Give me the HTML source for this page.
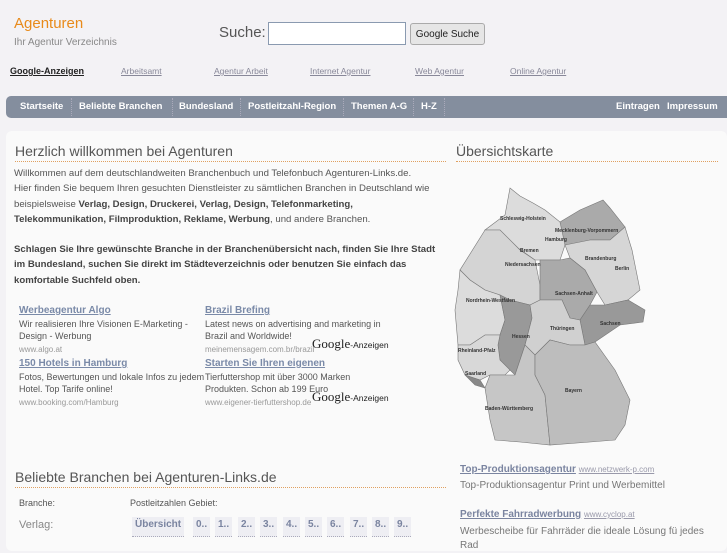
<!DOCTYPE html>
<html><head><meta charset="utf-8"><style>
*{margin:0;padding:0;box-sizing:border-box}
body{width:727px;height:545px;overflow:hidden;background:#f3f2f5;font-family:"Liberation Sans",sans-serif;color:#555;position:relative}
.a{position:absolute;white-space:nowrap}
.logo{left:14px;top:15px;font-size:15px;color:#e88a1a}
.sub{left:14px;top:37px;font-size:10px;color:#888}
.such{left:219px;top:24px;font-size:15px;color:#555}
.inp{left:268px;top:22px;width:138px;height:23px;border:1px solid #8a9ab0;background:#fff}
.btn{left:410px;top:23px;width:75px;height:22px;border:1px solid #aaa;border-radius:3px;background:#e6e6e6;font-size:10px;color:#222;text-align:center;line-height:21px}
.tl{top:66px;font-size:8.5px;color:#889;text-decoration:underline}
.nav{left:6px;top:96px;width:730px;height:22px;background:#848e9e;border-radius:5px}
.nv{top:101px;font-size:9.5px;font-weight:bold;color:#fff}
.sep{top:98px;height:18px;border-left:1px dotted #aab}
.box{left:6px;top:131px;width:721px;height:420px;background:#fafafa;border-radius:6px}
h2{position:absolute;font-weight:normal;font-size:14px;color:#555;border-bottom:1px dotted #e0a060;padding-bottom:2px}
.p{left:14px;font-size:9.6px;line-height:15.3px;color:#555}
b{color:#444}
.ad{font-size:9px;color:#555;line-height:12.5px}
.ad u{color:#7a8aa8;font-weight:bold;font-size:10px}
.ad s{text-decoration:none;color:#999;font-size:8px}
.g{font-size:8.5px;color:#222}
.g span{font-family:"Liberation Serif",serif;font-size:13px;color:#222}
.cell{top:517px;height:20px;background:#eeeef3;font-size:10px;font-weight:bold;color:#7a84a0;padding:2px 3px;border-bottom:1px dotted #aab}
</style></head><body>
<div class="a logo">Agenturen</div>
<div class="a sub">Ihr Agentur Verzeichnis</div>
<div class="a such">Suche:</div>
<div class="a inp"></div>
<div class="a btn">Google Suche</div>
<div class="a tl" style="left:10px;font-weight:bold;color:#222;font-size:9px">Google-Anzeigen</div>
<div class="a tl" style="left:121px">Arbeitsamt</div>
<div class="a tl" style="left:214px">Agentur Arbeit</div>
<div class="a tl" style="left:310px">Internet Agentur</div>
<div class="a tl" style="left:415px">Web Agentur</div>
<div class="a tl" style="left:510px">Online Agentur</div>
<div class="a nav"></div>
<div class="a nv" style="left:20px">Startseite</div><div class="a sep" style="left:71px"></div>
<div class="a nv" style="left:79px">Beliebte Branchen</div><div class="a sep" style="left:172px"></div>
<div class="a nv" style="left:179px">Bundesland</div><div class="a sep" style="left:240px"></div>
<div class="a nv" style="left:248px">Postleitzahl-Region</div><div class="a sep" style="left:343px"></div>
<div class="a nv" style="left:351px">Themen A-G</div><div class="a sep" style="left:413px"></div>
<div class="a nv" style="left:421px">H-Z</div><div class="a sep" style="left:444px"></div>
<div class="a nv" style="left:616px">Eintragen</div>
<div class="a nv" style="left:667px">Impressum</div>
<div class="a box"></div>
<h2 style="left:15px;top:143px;width:431px">Herzlich willkommen bei Agenturen</h2>
<div class="a p" style="top:166px">Willkommen auf dem deutschlandweiten Branchenbuch und Telefonbuch Agenturen-Links.de.<br>Hier finden Sie bequem Ihren gesuchten Dienstleister zu sämtlichen Branchen in Deutschland wie<br>beispielsweise <b>Verlag, Design, Druckerei, Verlag, Design, Telefonmarketing,</b><br><b>Telekommunikation, Filmproduktion, Reklame, Werbung</b>, und andere Branchen.</div>
<div class="a p" style="top:242px"><b>Schlagen Sie Ihre gewünschte Branche in der Branchenübersicht nach, finden Sie Ihre Stadt<br>im Bundesland, suchen Sie direkt im Städteverzeichnis oder benutzen Sie einfach das<br>komfortable Suchfeld oben.</b></div>
<div class="a ad" style="left:19px;top:304px"><u>Werbeagentur Algo</u><br>Wir realisieren Ihre Visionen E-Marketing -<br>Design - Werbung<br><s>www.algo.at</s></div>
<div class="a ad" style="left:205px;top:304px"><u>Brazil Brefing</u><br>Latest news on advertising and marketing in<br>Brazil and Worldwide!<br><s>meinemensagem.com.br/brazil</s></div>
<div class="a g" style="left:312px;top:336px"><span>Google</span>-Anzeigen</div>
<div class="a ad" style="left:19px;top:357px"><u>150 Hotels in Hamburg</u><br>Fotos, Bewertungen und lokale Infos zu jedem<br>Hotel. Top Tarife online!<br><s>www.booking.com/Hamburg</s></div>
<div class="a ad" style="left:205px;top:357px"><u>Starten Sie Ihren eigenen</u><br>Tierfuttershop mit über 3000 Marken<br>Produkten. Schon ab 199 Euro<br><s>www.eigener-tierfuttershop.de</s></div>
<div class="a g" style="left:312px;top:389px"><span>Google</span>-Anzeigen</div>
<h2 style="left:15px;top:469px;width:431px">Beliebte Branchen bei Agenturen-Links.de</h2>
<div class="a" style="left:19px;top:498px;font-size:9px">Branche:</div>
<div class="a" style="left:130px;top:498px;font-size:9px">Postleitzahlen Gebiet:</div>
<div class="a" style="left:19px;top:519px;font-size:11px;color:#888">Verlag:</div>
<div class="a cell" style="left:132px">Übersicht</div>
<div class="a cell" style="left:193px">0..</div><div class="a cell" style="left:215px">1..</div><div class="a cell" style="left:238px">2..</div><div class="a cell" style="left:260px">3..</div><div class="a cell" style="left:283px">4..</div><div class="a cell" style="left:305px">5..</div><div class="a cell" style="left:327px">6..</div><div class="a cell" style="left:350px">7..</div><div class="a cell" style="left:372px">8..</div><div class="a cell" style="left:394px">9..</div>
<h2 style="left:456px;top:143px;width:262px">Übersichtskarte</h2>
<svg class="a" style="left:450px;top:170px" width="200" height="285" viewBox="450 170 200 285">
<g stroke="#777" stroke-width="0.6">
<path d="M510 188 L520 196 L533 203 L545 210 L560 222 L570 225 L565 245 L560 260 L535 260 L518 248 L500 230 L485 230 L505 215 Z" fill="#dcdcdc"/>
<path d="M485 230 L500 230 L520 250 L535 260 L540 285 L540 300 L530 305 L510 300 L500 295 L485 290 L470 280 L460 270 Z" fill="#d4d4d4"/>
<path d="M560 222 L580 210 L603 200 L610 208 L625 227 L610 240 L590 240 L570 245 L565 245 Z" fill="#aaa"/>
<path d="M565 245 L590 240 L610 240 L625 227 L632 250 L640 290 L628 300 L605 305 L597 292 L585 270 L570 258 Z" fill="#d6d6d6"/>
<path d="M540 260 L560 260 L570 258 L585 270 L597 292 L590 305 L580 320 L570 318 L562 300 L540 300 L540 285 Z" fill="#aaa"/>
<path d="M590 305 L605 305 L628 300 L645 310 L643 322 L620 325 L595 342 L585 345 L580 320 Z" fill="#999"/>
<path d="M460 270 L470 280 L485 290 L500 295 L505 320 L500 335 L485 335 L470 345 L458 345 L455 310 L458 290 Z" fill="#dcdcdc"/>
<path d="M500 295 L510 300 L530 305 L532 318 L525 345 L520 360 L515 375 L510 370 L500 360 L498 345 L500 335 L505 320 Z" fill="#999"/>
<path d="M530 305 L540 300 L562 300 L570 318 L580 320 L585 345 L570 345 L550 340 L535 355 L525 345 L532 318 Z" fill="#d0d0d0"/>
<path d="M458 345 L470 345 L485 335 L500 335 L498 345 L500 360 L510 370 L505 375 L490 375 L480 380 L465 375 L458 360 Z" fill="#d8d8d8"/>
<path d="M465 375 L480 380 L485 388 L475 385 Z" fill="#888"/>
<path d="M485 388 L490 375 L505 375 L515 375 L520 360 L525 345 L535 355 L535 375 L545 395 L550 445 L520 442 L495 440 L490 420 Z" fill="#c6c6c6"/>
<path d="M535 355 L550 340 L570 345 L585 345 L595 342 L615 370 L625 390 L630 400 L625 425 L615 440 L590 442 L550 445 L545 395 L535 375 Z" fill="#bdbdbd"/>
</g>
<g font-size="5" fill="#333" font-weight="bold" font-family="Liberation Sans">
<text x="500" y="220">Schleswig-Holstein</text><text x="555" y="232">Mecklenburg-Vorpommern</text><text x="545" y="241">Hamburg</text><text x="520" y="252">Bremen</text><text x="505" y="266">Niedersachsen</text><text x="585" y="260">Brandenburg</text><text x="615" y="270">Berlin</text><text x="555" y="295">Sachsen-Anhalt</text><text x="466" y="302">Nordrhein-Westfalen</text><text x="600" y="325">Sachsen</text><text x="550" y="330">Thüringen</text><text x="512" y="338">Hessen</text><text x="458" y="352">Rheinland-Pfalz</text><text x="465" y="375">Saarland</text><text x="565" y="392">Bayern</text><text x="485" y="410">Baden-Württemberg</text>
</g></svg>
<div class="a" style="left:460px;top:464px;font-size:10px"><b style="color:#7a84a0;text-decoration:underline">Top-Produktionsagentur</b> <span style="font-size:8px;color:#99a;text-decoration:underline">www.netzwerk-p.com</span></div>
<div class="a" style="left:460px;top:480px;font-size:10px;color:#777">Top-Produktionsagentur Print und Werbemittel</div>
<div class="a" style="left:460px;top:509px;font-size:10px"><b style="color:#7a84a0;text-decoration:underline">Perfekte Fahrradwerbung</b> <span style="font-size:8px;color:#99a;text-decoration:underline">www.cyclop.at</span></div>
<div class="a" style="left:460px;top:525px;font-size:10px;color:#777;line-height:14px;white-space:normal;width:260px">Werbescheibe für Fahrräder die ideale Lösung fü jedes Rad</div>
</body></html>
